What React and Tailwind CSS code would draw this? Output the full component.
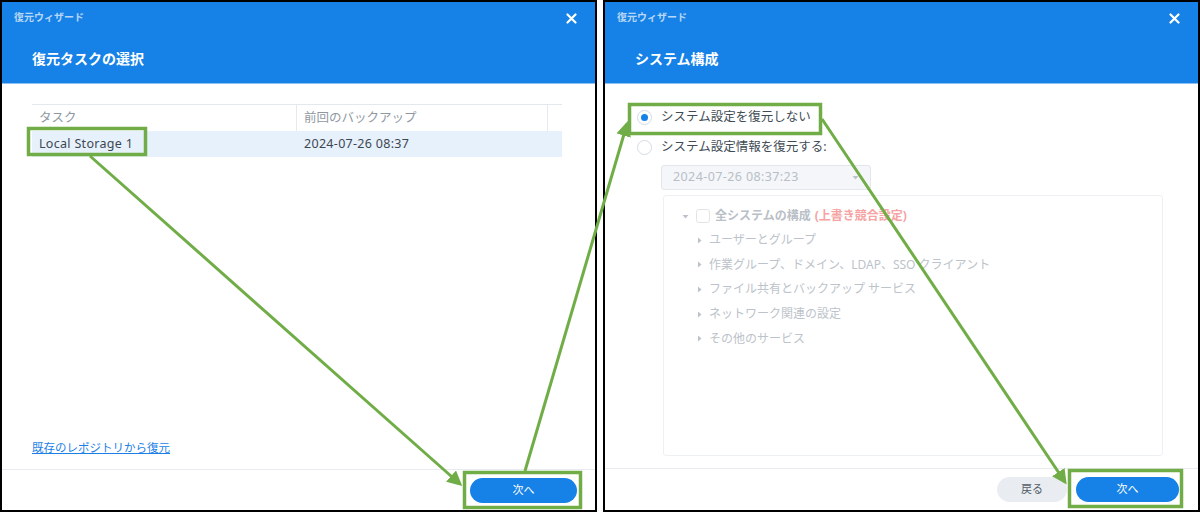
import React from "react";

const FONT = { fontFamily: '"Noto Sans", "Noto Sans CJK JP", sans-serif' };

const CloseIcon = () => (
	<svg width="11" height="11" viewBox="0 0 11 11">
		<path d="M1.5 1.5 L9.5 9.5 M9.5 1.5 L1.5 9.5" stroke="#ffffff" strokeWidth="2.2" strokeLinecap="round" />
	</svg>
);

const Header = ({ title }) => (
	<div className="h-[82px] bg-[#1681e6] flex flex-col px-[12px] pt-[8px] border-b border-[#8cc0f2]">
		<div className="flex items-center justify-between">
			<p className="text-[10px] font-bold text-white/70 leading-[14px]">復元ウィザード</p>
			<div className="mr-[6px] mt-[2px]">
				<CloseIcon />
			</div>
		</div>
		<p className="text-[14px] font-bold text-white mt-[25px] ml-[18px] leading-[20px]">{title}</p>
	</div>
);

const Caret = ({ down }) => (
	<svg width="7" height="7" viewBox="0 0 7 7">
		{down ? <path d="M0.5 2 L6.5 2 L3.5 5.5 Z" fill="#bcc3ca" /> : <path d="M2 0.5 L5.5 3.5 L2 6.5 Z" fill="#bcc3ca" />}
	</svg>
);

const LeftPanel = () => (
	<div className="w-[597px] h-[512px] border-2 border-black flex flex-col bg-white">
		<Header title="復元タスクの選択" />
		<div className="flex-1 flex flex-col pt-[20px] px-[30px]">
			{/* TABLE */}
			<div className="w-[530px] border-t border-[#e3e8ee]">
				<div className="flex h-[26px] items-center text-[12.5px] text-[#8f98a2]">
					<div className="w-[265px] h-full flex items-center pl-[7px] border-r border-[#e6eaef]">タスク</div>
					<div className="w-[251px] h-full flex items-center pl-[7px] border-r border-[#e6eaef]">前回のバックアップ</div>
					<div className="flex-1"></div>
				</div>
				<div className="flex h-[26px] items-center text-[12.5px] tracking-[0.3px] text-[#3d4752] bg-[#e7f1fc]">
					<div className="w-[265px] pl-[7px]">Local Storage 1</div>
					<div className="w-[251px] pl-[7px]">2024-07-26 08:37</div>
				</div>
			</div>
			<div className="flex-1"></div>
			<p className="text-[11.5px] text-[#1b7fe6] underline mb-[14px] leading-[14px]">既存のレポジトリから復元</p>
		</div>
		<div className="h-[41px] border-t border-[#e8ecf1] flex items-center justify-end pr-[18px]">
			<div className="w-[107px] h-[25px] rounded-full bg-[#1681e6] text-white text-[11px] flex items-center justify-center">次へ</div>
		</div>
	</div>
);

const treeItems = [
	"ユーザーとグループ",
	"作業グループ、ドメイン、LDAP、SSO クライアント",
	"ファイル共有とバックアップ サービス",
	"ネットワーク関連の設定",
	"その他のサービス",
];

const Radio = ({ checked, label }) => (
	<div className="flex items-center h-[30px]">
		<div className="w-[15px] h-[15px] rounded-full border border-[#d5dbe2] bg-white flex items-center justify-center">
			{checked && <div className="w-[7px] h-[7px] rounded-full bg-[#1681e6]"></div>}
		</div>
		<span className="ml-[9px] text-[12.5px] text-[#414b55]">{label}</span>
	</div>
);

const RightPanel = () => (
	<div className="w-[597px] h-[512px] border-2 border-black flex flex-col bg-white">
		<Header title="システム構成" />
		<div className="flex-1 flex flex-col pt-[18px] pl-[32px]">
			<Radio checked label="システム設定を復元しない" />
			<Radio label="システム設定情報を復元する:" />
			<div className="ml-[24px] mt-[3px] w-[210px] h-[25px] rounded-[3px] border border-[#e3e7ec] bg-[#f4f6f9] flex items-center justify-between px-[11px]">
				<span className="text-[12.5px] tracking-[0.4px] text-[#b8bfc7]">2024-07-26 08:37:23</span>
				<Caret down />
			</div>
			<div className="ml-[26px] mt-[5px] w-[500px] h-[261px] rounded-[3px] border border-[#eef1f4] pt-[8px] pl-[18px]">
				<div className="flex items-center h-[24px]">
					<Caret down />
					<div className="ml-[7px] w-[14px] h-[14px] rounded-[3px] border border-[#e1e5ea] bg-white"></div>
					<span className="ml-[5px] text-[12px] font-bold text-[#b9c0c7]">全システムの構成</span>
					<span className="ml-[4px] text-[12px] font-bold text-[#f5a3a3]">(上書き競合設定)</span>
				</div>
				{treeItems.map((item) => (
					<div key={item} className="flex items-center h-[24.6px] pl-[14px]">
						<Caret />
						<span className="ml-[6px] text-[12px] text-[#bcc3ca]">{item}</span>
					</div>
				))}
			</div>
		</div>
		<div className="h-[42px] border-t border-[#e8ecf1] flex items-center justify-end pr-[19px] gap-[9px]">
			<div className="w-[70px] h-[25px] rounded-full bg-[#e9edf2] text-[#545e69] text-[11px] flex items-center justify-center">戻る</div>
			<div className="w-[103px] h-[25px] rounded-full bg-[#1681e6] text-white text-[11px] flex items-center justify-center">次へ</div>
		</div>
	</div>
);

// green annotation boxes and arrows drawn over both screenshots
const Annotations = () => (
	<svg className="absolute inset-0 pointer-events-none" width="1200" height="512" viewBox="0 0 1200 512">
		<defs>
			<marker id="head" markerWidth="5" markerHeight="5" refX="4" refY="2.5" orient="auto" markerUnits="strokeWidth">
				<path d="M0 0 L5 2.5 L0 5 Z" fill="#70ad47" />
			</marker>
		</defs>
		<g fill="none" stroke="#70ad47" strokeWidth="3.5">
			<rect x="28.5" y="128.5" width="117" height="26" />
			<rect x="464.5" y="472.5" width="116" height="35" />
			<rect x="629.5" y="104.5" width="191" height="29" />
			<rect x="1069.5" y="470.5" width="112" height="36" />
		</g>
		<g stroke="#70ad47" strokeWidth="3">
			<line x1="90" y1="156" x2="460" y2="484" markerEnd="url(#head)" />
			<line x1="525" y1="471" x2="627" y2="124" markerEnd="url(#head)" />
			<line x1="822" y1="119" x2="1065" y2="482" markerEnd="url(#head)" />
		</g>
	</svg>
);

export default function App() {
	return (
		<div className="relative w-[1200px] h-[512px] bg-white flex gap-[6px]" style={FONT}>
			<LeftPanel />
			<RightPanel />
			<Annotations />
		</div>
	);
}
